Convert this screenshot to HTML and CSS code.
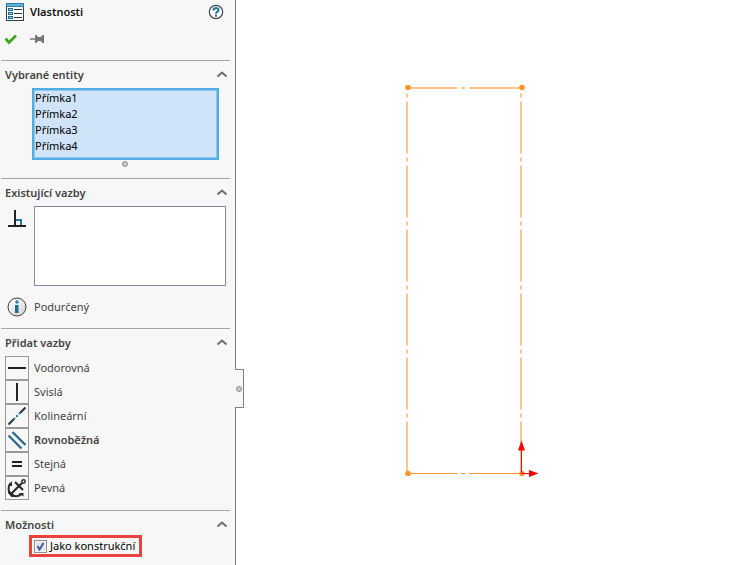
FILE: index.html
```
<!DOCTYPE html>
<html lang="cs">
<head>
    <meta charset="UTF-8">
    <meta name="viewport" content="width=device-width, initial-scale=1.0">
    <title>Vlastnosti</title>
    <link rel="stylesheet" href="styles.css">
</head>
<body>
    <aside class="panel">
        <header class="panel-header">
            <svg width="18" height="18" viewBox="0 0 18 18">
                <rect x="0.5" y="0.5" width="17" height="17" fill="#fff" stroke="#33404a"/>
                <rect x="0" y="0" width="18" height="4" fill="#2b7fa8"/>
                <rect x="1" y="1" width="16" height="2" fill="#62b4d8"/>
                <path d="M2 5h5v3H2zM2 9h5v3H2zM2 13h5v3H2z" fill="#1f6d96"/>
                <path d="M3 6.500h3M3 10.500h3M3 14.500h3" stroke="#9fd0e6"/>
                <path d="M8 6.500h8M8 10.500h8M8 14.500h8" stroke="#333"/>
            </svg>
            <h1>Vlastnosti</h1>
            <button class="icon-btn" type="button" aria-label="Nápověda">
                <svg width="16" height="16" viewBox="0 0 16 16">
                    <circle cx="8" cy="8" r="6.700" fill="#fafafa" stroke="#3d4850" stroke-width="1.200"/>
                    <path d="M5.500 6.500C5.500 3.200 10.500 3.300 10.500 6C10.500 7.700 8 7.500 8 9.800" fill="none" stroke="#1f7197" stroke-width="2"/>
                    <rect x="7" y="10.700" width="2" height="2" fill="#1f7197"/>
                </svg>
            </button>
        </header>

        <div class="actions">
            <button class="icon-btn" type="button" aria-label="OK">
                <svg width="14" height="14" viewBox="0 0 14 14">
                    <path d="M1.500 6.500L5 10.500L12 3.500" fill="none" stroke="#3fa521" stroke-width="2.800"/>
                </svg>
            </button>
            <button class="icon-btn" type="button" aria-label="Připnout">
                <svg width="14" height="14" viewBox="0 0 14 14">
                    <path d="M0 7h5" stroke="#777" stroke-width="1.500"/>
                    <path d="M5 3h1.500l1.500 2h2.500l2-2H14v8h-1.500l-2-2h-2.500l-1.500 2H5z" fill="#777"/>
                </svg>
            </button>
        </div>

        <section class="group">
            <div class="group-title">
                <h2 id="vybrane">Vybrané entity</h2>
                <button class="icon-btn" type="button" aria-label="Sbalit">
                    <svg width="12" height="8" viewBox="0 0 12 8"><path d="M1.500 5.500L6 1.500L10.500 5.500" fill="none" stroke="#6d6d6d" stroke-width="2"/></svg>
                </button>
            </div>
            <select class="entities" size="4" multiple aria-labelledby="vybrane">
                <option>Přímka1</option>
                <option>Přímka2</option>
                <option>Přímka3</option>
                <option>Přímka4</option>
            </select>
            <div class="grip"></div>
        </section>

        <section class="group">
            <div class="group-title">
                <h2 id="existujici">Existující vazby</h2>
                <button class="icon-btn" type="button" aria-label="Sbalit">
                    <svg width="12" height="8" viewBox="0 0 12 8"><path d="M1.500 5.500L6 1.500L10.500 5.500" fill="none" stroke="#6d6d6d" stroke-width="2"/></svg>
                </button>
            </div>
            <div class="existing">
                <svg width="20" height="22" viewBox="0 0 20 22">
                    <path d="M1 20h18M8 4v16" stroke="#222" stroke-width="2"/>
                    <path d="M9 14h5v5" fill="none" stroke="#25789f" stroke-width="2"/>
                </svg>
                <select class="relations-list" size="4" aria-labelledby="existujici"></select>
            </div>
            <div class="status">
                <svg width="20" height="20" viewBox="0 0 20 20">
                    <defs>
                        <linearGradient id="ball" x1="0" y1="0" x2="1" y2="1">
                            <stop offset="0" stop-color="#fff"/>
                            <stop offset="1" stop-color="#d2d2d2"/>
                        </linearGradient>
                    </defs>
                    <circle cx="10" cy="10" r="9" fill="url(#ball)" stroke="#3a3a3a"/>
                    <circle cx="10" cy="5" r="1.700" fill="#2b86ad"/>
                    <path d="M8 8h3.500v8H8z" fill="#206b90"/>
                </svg>
                <span>Podurčený</span>
            </div>
        </section>

        <section class="group">
            <div class="group-title">
                <h2>Přidat vazby</h2>
                <button class="icon-btn" type="button" aria-label="Sbalit">
                    <svg width="12" height="8" viewBox="0 0 12 8"><path d="M1.500 5.500L6 1.500L10.500 5.500" fill="none" stroke="#6d6d6d" stroke-width="2"/></svg>
                </button>
            </div>
            <div class="relation">
                <button class="tool" type="button" id="vodorovna">
                    <svg width="22" height="22" viewBox="0 0 22 22"><path d="M2 11h18" stroke="#222" stroke-width="2"/></svg>
                </button>
                <label for="vodorovna">Vodorovná</label>
            </div>
            <div class="relation">
                <button class="tool" type="button" id="svisla">
                    <svg width="22" height="22" viewBox="0 0 22 22"><path d="M11 2v18" stroke="#222" stroke-width="2"/></svg>
                </button>
                <label for="svisla">Svislá</label>
            </div>
            <div class="relation">
                <button class="tool" type="button" id="kolinearni">
                    <svg width="22" height="22" viewBox="0 0 22 22">
                        <path d="M2.500 19.500l5.500-5.500M14 8l5.500-5.500" stroke="#333" stroke-width="2"/>
                        <path d="M7.500 14.500l1.500-1.500M10.200 11.800l1.600-1.600M13 9l1.500-1.500" stroke="#25789f" stroke-width="2"/>
                    </svg>
                </button>
                <label for="kolinearni">Kolineární</label>
            </div>
            <div class="relation suggested">
                <button class="tool" type="button" id="rovnobezna">
                    <svg width="22" height="22" viewBox="0 0 22 22">
                        <path d="M2.500 6.500l13 13M6.500 3l13 13" stroke="#25688a" stroke-width="2.200"/>
                    </svg>
                </button>
                <label for="rovnobezna">Rovnoběžná</label>
            </div>
            <div class="relation">
                <button class="tool" type="button" id="stejna">
                    <svg width="22" height="22" viewBox="0 0 22 22"><path d="M6 9h10M6 13h10" stroke="#222" stroke-width="2"/></svg>
                </button>
                <label for="stejna">Stejná</label>
            </div>
            <div class="relation">
                <button class="tool" type="button" id="pevna">
                    <svg width="22" height="22" viewBox="0 0 22 22" fill="none" stroke="#2a2a2a">
                        <circle cx="17.500" cy="4.500" r="1.700" stroke-width="1.500"/>
                        <path d="M16 6L5.500 16.500M9 5l8 8" stroke-width="2.200"/>
                        <path d="M4.500 6C1.500 10 2 15 5.500 17.500C8.500 20 13 19.500 15.500 17" stroke-width="2"/>
                        <path d="M2 13v3l3.500 4h5l-4-3.500z" fill="#2a2a2a" stroke="none"/>
                        <path d="M2 9l4-5v5zM12.500 16h5v3.500z" fill="#2a2a2a" stroke="none"/>
                    </svg>
                </button>
                <label for="pevna">Pevná</label>
            </div>
        </section>

        <section class="group">
            <div class="group-title">
                <h2>Možnosti</h2>
                <button class="icon-btn" type="button" aria-label="Sbalit">
                    <svg width="12" height="8" viewBox="0 0 12 8"><path d="M1.500 5.500L6 1.500L10.500 5.500" fill="none" stroke="#6d6d6d" stroke-width="2"/></svg>
                </button>
            </div>
            <label class="option"><input type="checkbox" checked>Jako konstrukční</label>
        </section>

        <button class="panel-tab" type="button" aria-label="Skrýt panel"><span class="dot"></span></button>
    </aside>

    <main class="sketch">
        <svg width="150" height="410" viewBox="400 80 150 410">
            <g fill="none" stroke="#ffc58a" stroke-width="2">
                <path d="M408 88h49M461 88h4M469 88h52"/>
                <!-- svisle osy -->
                <path d="M407 93.500V474M521 93.500V474" stroke-dasharray="4 4 52 4"/>
            </g>
            <path d="M408 473.500h49M461 473.500h4M469 473.500h52" stroke="#ff952d"/>
            <g fill="#ff952d">
                <circle cx="408" cy="87.500" r="2.800"/>
                <circle cx="522" cy="87.500" r="2.800"/>
                <circle cx="408" cy="473.500" r="2.800"/>
                <circle cx="522" cy="473.500" r="2.800"/>
            </g>
            <!-- pocatek -->
            <path d="M521.500 450v23.500h9" fill="none" stroke="#f00"/>
            <path d="M521.500 440.500l3.500 10h-7zM538.500 473.500l-9.500-3.500v7z" fill="#f00"/>
        </svg>
    </main>
</body>
</html>
```
FILE: styles.css
```
* {
    box-sizing: border-box;
}
body {
    margin: 0;
    min-height: 100vh;
    display: flex;
    background-color: #ffffff;
    color: #444444;
    font-family: "Noto Sans", sans-serif;
    font-size: 11px;
    line-height: 16px;
}
h1, h2 {
    margin: 0;
    flex: 1;
    font-size: 11px;
    font-weight: 600;
}
h1 {
    color: #111111;
}
svg {
    display: block;
    flex: none;
}
button {
    padding: 0;
    font: inherit;
    cursor: pointer;
}
.icon-btn {
    border: none;
    background: none;
}
.panel {
    position: relative;
    flex: none;
    width: 236px;
    background-color: #f7f7f7;
    border-right: 1px solid #808080;
}
.panel-header {
    display: flex;
    align-items: center;
    gap: 6px;
    padding: 3px 11px 0 6px;
}
.actions {
    display: flex;
    gap: 12px;
    height: 39px;
    padding: 11px 4px 0;
    align-items: flex-start;
}
.group {
    margin: 0 5px 0 1px;
    border-top: 1px solid #a6a6a6;
    padding-bottom: 10px;
}
.group-title {
    display: flex;
    align-items: center;
    padding: 6px 2px 5px 4px;
}
/* seznam vybranych entit */
.entities {
    display: block;
    width: 187px;
    height: 72px;
    margin-left: 31px;
    padding: 0;
    border: 2px solid #50ade3;
    border-radius: 0;
    outline: none;
    box-shadow: inset 0 0 0 1px #94c7ee;
    background-color: #cfe4f8;
    color: #000000;
    font: inherit;
    overflow: hidden;
}
.entities option {
    min-height: 16px;
    padding: 0 1px;
}
.grip, .dot {
    display: block;
    width: 6px;
    height: 6px;
    border: 1px solid #8c8c8c;
    border-radius: 50%;
    background-color: #cccccc;
}
.grip {
    margin: 1px auto 1px 121px;
}
.existing {
    display: flex;
    gap: 7px;
    padding-left: 6px;
}
.relations-list {
    flex: 1;
    height: 80px;
    margin-right: 4px;
    border: 1px solid #828ba5;
    border-radius: 0;
    background-color: #ffffff;
    overflow: hidden;
}
.status {
    display: flex;
    align-items: center;
    gap: 7px;
    padding: 11px 0 1px 6px;
}
.relation {
    display: flex;
    align-items: center;
    gap: 5px;
    padding-left: 4px;
}
.suggested {
    font-weight: 600;
}
.tool {
    width: 24px;
    height: 24px;
    border: 1px solid #999999;
    background-color: #f7f7f7;
}
.option {
    display: flex;
    align-items: center;
    gap: 3px;
    width: max-content;
    margin: -3px 0 0 28px;
    padding: 0 4px 0 2px;
    border: 3px solid #e8433f;
    color: #000000;
}
.option input {
    appearance: none;
    width: 13px;
    height: 13px;
    margin: 0;
    border: 1px solid #8e8f8f;
    background: #dfe5ee url("data:image/svg+xml,%3Csvg xmlns='http://www.w3.org/2000/svg' viewBox='0 0 11 11'%3E%3Cpath d='M2.500 5l2 3.500L8.500 2' fill='none' stroke='%23435a9c' stroke-width='2'/%3E%3C/svg%3E");
    box-shadow: inset 0 0 0 1px #f4f4f4;
}
.panel-tab {
    position: absolute;
    top: 369px;
    right: -9px;
    display: flex;
    align-items: center;
    justify-content: center;
    width: 9px;
    height: 39px;
    border: 1px solid #808080;
    border-left: none;
    background-color: #f7f7f7;
}
.sketch {
    flex: 1;
    padding: 80px 0 0 164px;
}
```
